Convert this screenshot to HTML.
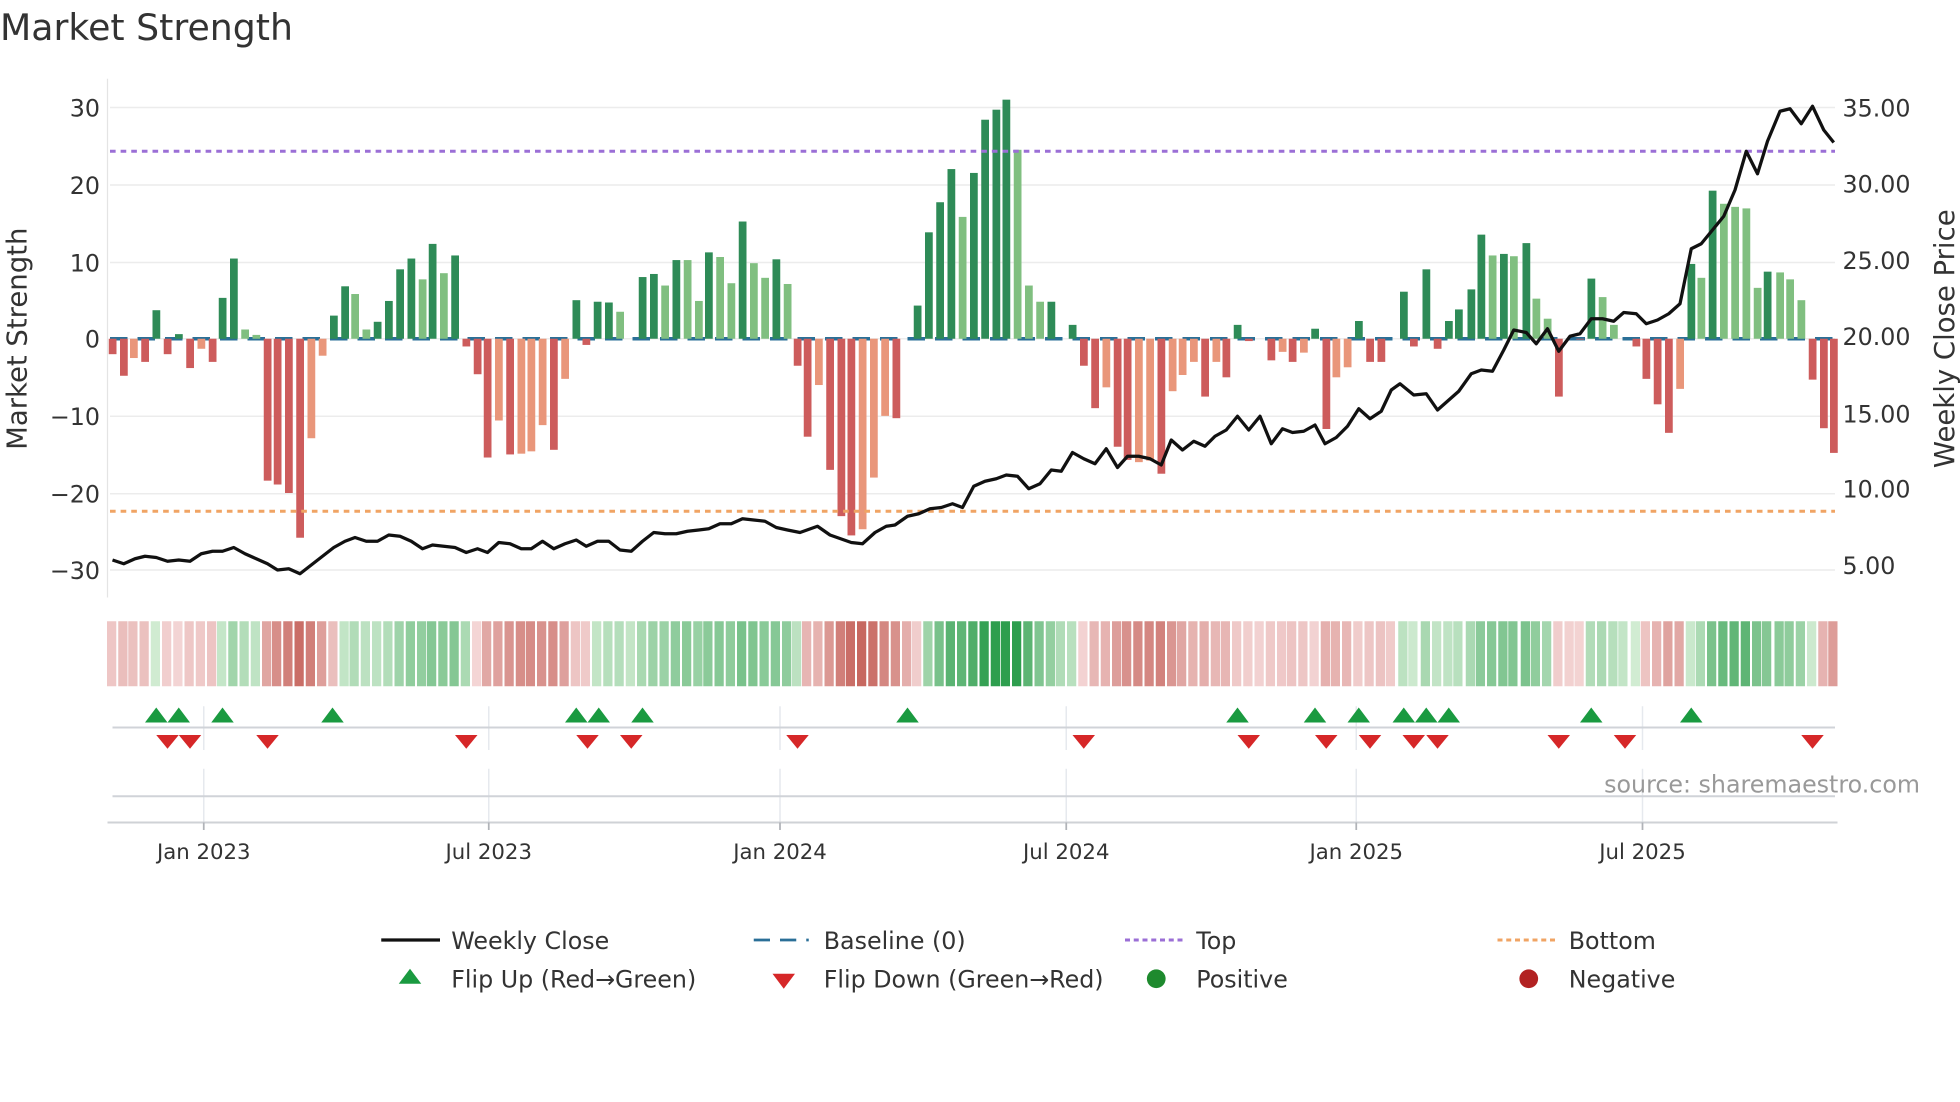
<!DOCTYPE html>
<html><head><meta charset="utf-8"><style>
html,body{margin:0;padding:0;background:#fff;}
svg{display:block;font-family:"DejaVu Sans","Liberation Sans",sans-serif;}
</style></head><body>
<svg id="s" width="1960" height="1102" viewBox="0 0 1568 881.6" xmlns="http://www.w3.org/2000/svg">
<rect width="1568" height="882" fill="#fff"/>
<text x="0" y="32" font-size="29" fill="#333">Market Strength</text>
<g id="grid" stroke="#ececec" stroke-width="1.2"></g>
<line x1="86" y1="63" x2="86" y2="478" stroke="#e4e4e4" stroke-width="1"/>
<g font-size="19" fill="#333" text-anchor="end">
<text x="80" y="93">30</text><text x="80" y="155">20</text><text x="80" y="217">10</text><text x="80" y="278">0</text>
<text x="80" y="340">−10</text><text x="80" y="402">−20</text><text x="80" y="463">−30</text>
</g>
<g font-size="19" fill="#333">
<text x="1474" y="93">35.00</text><text x="1474" y="154">30.00</text><text x="1474" y="215">25.00</text><text x="1474" y="276">20.00</text>
<text x="1474" y="338">15.00</text><text x="1474" y="398">10.00</text><text x="1474" y="459">5.00</text>
</g>
<text transform="translate(21,271) rotate(-90)" font-size="22" fill="#333" text-anchor="middle">Market Strength</text>
<text transform="translate(1563,271) rotate(-90)" font-size="22" fill="#333" text-anchor="middle">Weekly Close Price</text>
<line x1="88" y1="271" x2="1468" y2="271" stroke="#2a6f97" stroke-width="2.8" stroke-dasharray="14,8"/>
<g id="bars"></g>
<line x1="88" y1="121" x2="1468" y2="121" stroke="#9b6fd6" stroke-width="2.4" stroke-dasharray="4.5,4"/>
<line x1="88" y1="409" x2="1468" y2="409" stroke="#f0a464" stroke-width="2.4" stroke-dasharray="4.5,4"/>
<polyline id="price" fill="none" stroke="#111" stroke-width="2.6" stroke-linejoin="round"/>
<g id="strip"></g>
<g stroke="#e6e9ee" stroke-width="1.2">
<line x1="163" y1="565" x2="163" y2="600"/><line x1="391" y1="565" x2="391" y2="600"/><line x1="624" y1="565" x2="624" y2="600"/><line x1="853" y1="565" x2="853" y2="600"/><line x1="1085" y1="565" x2="1085" y2="600"/><line x1="1314" y1="565" x2="1314" y2="600"/>
<line x1="163" y1="615" x2="163" y2="658"/><line x1="391" y1="615" x2="391" y2="658"/><line x1="624" y1="615" x2="624" y2="658"/><line x1="853" y1="615" x2="853" y2="658"/><line x1="1085" y1="615" x2="1085" y2="658"/><line x1="1314" y1="615" x2="1314" y2="658"/>
</g>
<line x1="90" y1="582" x2="1468" y2="582" stroke="#d0d3d8" stroke-width="1.6"/>
<line x1="90" y1="637" x2="1468" y2="637" stroke="#d0d3d8" stroke-width="1.6"/>
<line x1="86" y1="658" x2="1470" y2="658" stroke="#cfd2d6" stroke-width="1.6"/>
<g stroke="#b0b3b8" stroke-width="1.4">
<line x1="163" y1="658" x2="163" y2="664"/><line x1="391" y1="658" x2="391" y2="664"/><line x1="624" y1="658" x2="624" y2="664"/><line x1="853" y1="658" x2="853" y2="664"/><line x1="1085" y1="658" x2="1085" y2="664"/><line x1="1314" y1="658" x2="1314" y2="664"/>
</g>
<g id="marks"></g>
<g font-size="17" fill="#333" text-anchor="middle">
<text x="163" y="687">Jan 2023</text><text x="391" y="687">Jul 2023</text><text x="624" y="687">Jan 2024</text><text x="853" y="687">Jul 2024</text><text x="1085" y="687">Jan 2025</text><text x="1314" y="687">Jul 2025</text>
</g>
<text x="1536" y="634" font-size="19" fill="#999" text-anchor="end">source: sharemaestro.com</text>
<g font-size="19" fill="#333">
<line x1="305" y1="752" x2="352" y2="752" stroke="#111" stroke-width="2.6"/><text x="361" y="759">Weekly Close</text>
<line x1="603" y1="752" x2="647" y2="752" stroke="#2a6f97" stroke-width="2.2" stroke-dasharray="13,8"/><text x="659" y="759">Baseline (0)</text>
<line x1="900" y1="752" x2="946" y2="752" stroke="#9b6fd6" stroke-width="2.4" stroke-dasharray="4,3"/><text x="957" y="759">Top</text>
<line x1="1198" y1="752" x2="1244" y2="752" stroke="#f0a464" stroke-width="2.4" stroke-dasharray="4,3"/><text x="1255" y="759">Bottom</text>
<polygon points="319,787 337,787 328,775" fill="#1a9a40"/><text x="361" y="790">Flip Up (Red→Green)</text>
<polygon points="618,779 636,779 627,791" fill="#d62728"/><text x="659" y="790">Flip Down (Green→Red)</text>
<circle cx="925" cy="783" r="7.5" fill="#1e8a2e"/><text x="957" y="790">Positive</text>
<circle cx="1223" cy="783" r="7.5" fill="#b22222"/><text x="1255" y="790">Negative</text>
</g>
</svg>
<script>
var NS="http://www.w3.org/2000/svg";
function el(p,t,a){var e=document.createElementNS(NS,t);for(var k in a)e.setAttribute(k,a[k]);p.appendChild(e);return e;}
var g=document.getElementById('grid');
[86,148,210,271,333,395,456].forEach(function(y){el(g,'line',{x1:88,x2:1468,y1:y,y2:y});});
var D="90 -2 R,99 -4.8 R,107 -2.5 LR,116 -3 R,125 3.7 G,134 -2 R,143 0.6 G,152 -3.8 R,161 -1.3 LR,170 -3 R,178 5.3 G,187 10.4 G,196 1.2 LG,205 0.5 LG,214 -18.4 R,222 -18.9 R,231 -20 R,240 -25.8 R,249 -12.9 LR,258 -2.2 LR,267 3 G,276 6.8 G,284 5.8 LG,293 1.2 LG,302 2.2 G,311 4.9 G,320 9 G,329 10.4 G,338 7.7 LG,346 12.3 G,355 8.5 LG,364 10.8 G,373 -1 R,382 -4.6 R,390 -15.4 R,399 -10.6 LR,408 -15 R,417 -14.9 LR,425 -14.6 LR,434 -11.2 LR,443 -14.4 R,452 -5.2 LR,461 5 G,469 -0.8 R,478 4.8 G,487 4.7 G,496 3.5 LG,505 0 G,514 8 G,523 8.4 G,532 6.9 LG,541 10.2 G,550 10.2 LG,559 4.9 LG,567 11.2 G,576 10.6 LG,585 7.2 LG,594 15.2 G,603 9.8 LG,612 7.9 LG,621 10.3 G,630 7.1 LG,638 -3.5 R,646 -12.7 R,655 -6 LR,664 -17 R,673 -23 R,681 -25.5 R,690 -24.7 LR,699 -18 LR,708 -10 LR,717 -10.3 R,726 0 G,734 4.3 G,743 13.8 G,752 17.7 G,761 22 G,770 15.8 LG,779 21.5 G,788 28.4 G,797 29.7 G,805 31 G,814 24.5 LG,823 6.9 LG,832 4.8 LG,841 4.8 G,849 0 G,858 1.8 G,867 -3.5 R,876 -9 R,885 -6.3 LR,894 -14 R,902 -15.7 R,911 -16 LR,920 -15.8 LR,929 -17.5 R,938 -6.8 LR,946 -4.7 LR,955 -3 LR,964 -7.5 R,973 -3 LR,981 -5 R,990 1.8 G,999 -0.3 R,1008 0 G,1017 -2.8 R,1026 -1.7 LR,1034 -3 R,1043 -1.8 LR,1052 1.3 G,1061 -11.7 R,1069 -5 LR,1078 -3.7 LR,1087 2.3 G,1096 -3 R,1105 -3 R,1113 0 G,1123 6.1 G,1131 -1 R,1141 9 G,1150 -1.3 R,1159 2.3 G,1167 3.8 G,1177 6.4 G,1185 13.5 G,1194 10.8 LG,1203 11 G,1211 10.7 LG,1221 12.4 G,1229 5.2 LG,1238 2.6 LG,1247 -7.5 R,1256 0 G,1264 -0.1 R,1273 7.8 G,1282 5.4 LG,1291 1.8 LG,1299 0 G,1309 -1 R,1317 -5.2 R,1326 -8.5 R,1335 -12.2 R,1344 -6.5 LR,1353 9.7 G,1361 7.9 LG,1370 19.2 G,1379 17.5 LG,1388 17.1 LG,1397 16.9 LG,1406 6.6 LG,1414 8.7 G,1424 8.6 LG,1432 7.7 LG,1441 5 LG,1450 -5.3 R,1459 -11.6 R,1467 -14.8 R";
var col={G:'#2e8b57',LG:'#80bf80',R:'#cd5c5c',LR:'#e9967a'};
var bars=document.getElementById('bars'),strip=document.getElementById('strip');
var arr=D.split(',').map(function(s){var p=s.split(' ');return [+p[0],+p[1],p[2]];});
var sm=0;
arr.forEach(function(b,i){
 var x=b[0],v=b[1],h=Math.abs(v)*6.17;
 if(h>0.3) el(bars,'rect',{x:x-3,width:6.2,y:v>0?271-h:271,height:h,fill:col[b[2]]});
 sm=i==0?v:sm*0.5+v*0.5;
 var t=Math.min(Math.abs(sm)/25,1),c;
 function mix(a,b2,t){return 'rgb('+a.map(function(q,j){return Math.round(q+(b2[j]-q)*t);}).join(',')+')';}
 if(sm>=0) c=mix([214,238,214],[46,158,78],Math.pow(t,0.8)); else c=mix([244,214,214],[196,96,88],Math.pow(t,0.8));
 el(strip,'rect',{x:x-4.4,width:7.4,y:497,height:52,fill:c});
});
var P="90,448 99,451 108,447 116,445 125,446 134,449 143,448 152,449 161,443 170,441 178,441 187,438 196,443 205,447 214,451 222,456 231,455 240,459 249,452 258,445 267,438 276,433 284,430 293,433 302,433 311,428 320,429 329,433 338,439 346,436 355,437 364,438 373,442 382,439 390,442 399,434 408,435 417,439 425,439 434,433 443,439 452,435 461,432 469,437 478,433 487,433 496,440 505,441 514,433 523,426 532,427 541,427 550,425 559,424 567,423 576,419 585,419 594,415 603,416 612,417 621,422 630,424 640,426 654,421 664,428 681,434 690,435 700,426 709,421 716,420 726,413 735,411 744,407 753,406 762,403 770,406 779,389 788,385 797,383 805,380 814,381 823,391 832,387 841,376 849,377 858,362 867,367 876,371 885,359 894,374 902,365 911,365 920,367 929,372 937,352 946,360 955,353 964,357 972,349 981,344 990,333 999,344 1008,333 1017,355 1026,343 1034,346 1043,345 1052,340 1060,355 1069,350 1078,341 1087,327 1096,335 1105,329 1113,312 1120,307 1131,316 1141,315 1150,328 1167,313 1177,299 1185,296 1194,297 1203,280 1211,264 1221,266 1229,275 1238,263 1247,281 1256,269 1264,267 1273,255 1282,255 1291,257 1299,250 1309,251 1317,259 1326,256 1335,251 1344,243 1353,199 1361,195 1370,184 1379,173 1388,152 1397,121 1406,139 1414,113 1424,89 1432,87 1441,99 1450,85 1459,104 1467,114";
document.getElementById('price').setAttribute('points',P);
var m=document.getElementById('marks');
[125,143,178,266,461,479,514,726,990,1052,1087,1123,1141,1159,1273,1353].forEach(function(x){el(m,'polygon',{points:(x-9)+',578 '+(x+9)+',578 '+x+',566',fill:'#1a9a40'});});
[134,152,214,373,470,505,638,867,999,1061,1096,1131,1150,1247,1300,1450].forEach(function(x){el(m,'polygon',{points:(x-9)+',588 '+(x+9)+',588 '+x+',599',fill:'#d62728'});});
</script>
</body></html>
